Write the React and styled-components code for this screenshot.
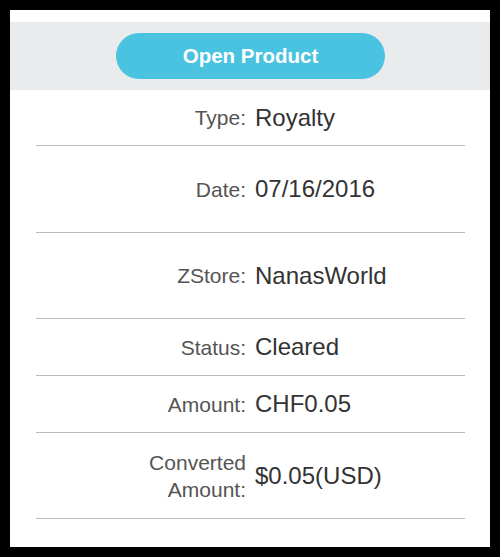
import React from "react";
import styled, { createGlobalStyle } from "styled-components";

const GlobalStyle = createGlobalStyle`
  html, body {
    margin: 0;
    padding: 0;
    background: #000;
  }
  body {
    font-family: "Liberation Sans", Arial, sans-serif;
  }
`;

const Panel = styled.div`
  margin: 10px;
  width: 480px;
  height: 537px;
  background: #fff;
  padding-top: 12px;
  box-sizing: border-box;
`;

const ActionBar = styled.div`
  display: flex;
  justify-content: center;
  align-items: center;
  height: 68px;
  background: #eaebec;
`;

const OpenButton = styled.button`
  width: 269px;
  height: 46px;
  border: none;
  border-radius: 23px;
  background: #49c3e0;
  color: #fff;
  font-family: "Liberation Sans", Arial, sans-serif;
  font-weight: bold;
  font-size: 20.5px;
  cursor: pointer;
  padding: 0;
  margin-left: 1px;
`;

const Details = styled.div`
  margin: 0 25px 0 26px;
`;

const Row = styled.div`
  display: grid;
  grid-template-columns: 1fr 1fr;
  column-gap: 9px;
  align-items: center;
  height: ${(props) => props.height}px;
  border-bottom: 1px solid #b9b9b9;
`;

const Label = styled.div`
  justify-self: end;
  max-width: 112px;
  text-align: right;
  font-size: 21px;
  line-height: 27px;
  color: #555;
`;

const Value = styled.div`
  font-size: 24px;
  color: #333;
`;

const rows = [
  { label: "Type:", value: "Royalty", height: 55 },
  { label: "Date:", value: "07/16/2016", height: 86 },
  { label: "ZStore:", value: "NanasWorld", height: 85 },
  { label: "Status:", value: "Cleared", height: 56 },
  { label: "Amount:", value: "CHF0.05", height: 56 },
  { label: "Converted Amount:", value: "$0.05(USD)", height: 85 },
];

const App = () => {
  return (
    <>
      <GlobalStyle />
      <Panel>
        <ActionBar>
          <OpenButton>Open Product</OpenButton>
        </ActionBar>
        <Details>
          {rows.map((row) => (
            <Row key={row.label} height={row.height}>
              <Label>{row.label}</Label>
              <Value>{row.value}</Value>
            </Row>
          ))}
        </Details>
      </Panel>
    </>
  );
};

export default App;
